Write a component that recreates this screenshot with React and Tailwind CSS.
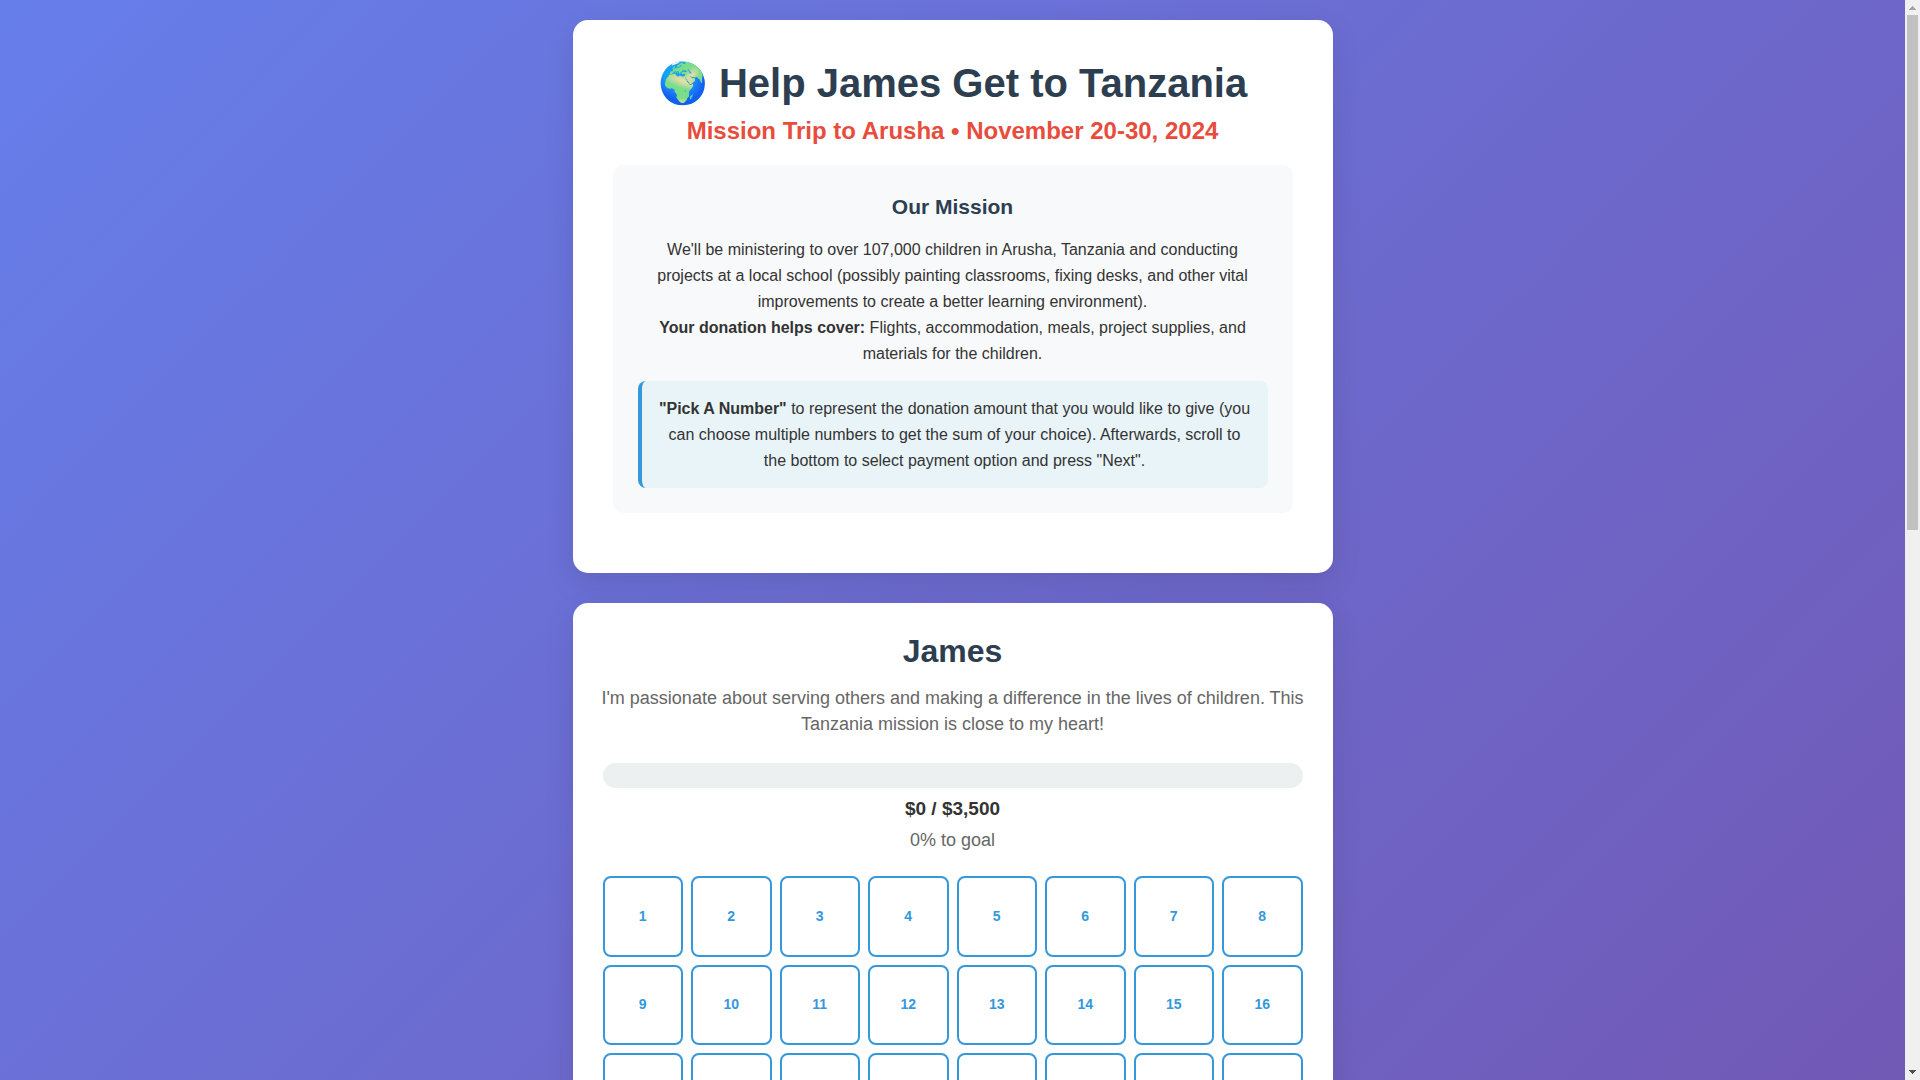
import { useState } from 'react'

const GOAL = 3500
const NUMBERS = Array.from({ length: 24 }, (_, i) => i + 1)

function MissionCard() {
  return (
    <header className="mb-[30px] rounded-[15px] bg-white p-10 pb-[60px] text-center shadow-[0_10px_30px_rgba(0,0,0,0.1)]">
      <h1 className="mb-[11px] text-[40px] leading-[46px] font-bold text-[#2c3e50]">
        🌍 Help James Get to Tanzania
      </h1>
      <p className="mb-[20px] text-[24px] leading-[28px] font-bold text-[#e74c3c]">
        Mission Trip to Arusha • November 20-30, 2024
      </p>

      <section className="rounded-[10px] bg-[#f8f9fa] p-[25px]">
        <h2 className="mb-[14px] text-[21px] leading-[33px] font-bold text-[#2c3e50]">Our Mission</h2>
        <p className="leading-[26px]">
          We'll be ministering to over 107,000 children in Arusha, Tanzania and conducting projects at a
          local school (possibly painting classrooms, fixing desks, and other vital improvements to create
          a better learning environment).
          <br />
          <strong>Your donation helps cover:</strong> Flights, accommodation, meals, project supplies, and
          materials for the children.
        </p>
        <p className="mt-[14px] rounded-[8px] border-l-4 border-[#3498db] bg-[#e8f4f8] p-[15px] pb-[14px] leading-[26px]">
          <strong>"Pick A Number"</strong> to represent the donation amount that you would like to give
          (you can choose multiple numbers to get the sum of your choice). Afterwards, scroll to the bottom
          to select payment option and press "Next".
        </p>
      </section>
    </header>
  )
}

function Progress({ raised }) {
  const percent = Math.min(100, Math.round((raised / GOAL) * 100))

  return (
    <div className="mb-[21px]">
      <div className="h-[25px] overflow-hidden rounded-full bg-[#ecf0f1]">
        <div className="h-full bg-[#3498db]" style={{ width: `${percent}%` }} />
      </div>
      <p className="mt-[6px] text-[19px] leading-[30px] font-bold">
        ${raised} / ${GOAL.toLocaleString('en-US')}
      </p>
      <p className="mt-px text-[18px] leading-[30px] text-[#666]">{percent}% to goal</p>
    </div>
  )
}

function NumberGrid({ selected, onToggle }) {
  return (
    <div className="grid grid-cols-8 gap-2">
      {NUMBERS.map(n => (
        <button
          key={n}
          type="button"
          aria-pressed={selected.includes(n)}
          onClick={() => onToggle(n)}
          className={`aspect-square cursor-pointer rounded-[8px] border-2 border-[#3498db] text-[14px] font-bold ${
            selected.includes(n) ? 'bg-[#3498db] text-white' : 'bg-white text-[#3498db]'
          }`}
        >
          {n}
        </button>
      ))}
    </div>
  )
}

function Scrollbar() {
  return (
    <div className="flex w-[15px] shrink-0 flex-col items-center bg-[#f0f0f0]" aria-hidden="true">
      <svg className="h-[15px] w-[15px] shrink-0" viewBox="0 0 15 15" fill="#a3a3a3" shapeRendering="crispEdges">
        <path d="M7 6h1v1h1v1h1v1h1v1H4V9h1V8h1V7h1z" />
      </svg>
      <div className="flex w-[11px] flex-1 flex-col">
        <div className="h-[49%] bg-[#c1c1c1]" />
      </div>
      <svg className="h-[15px] w-[15px] shrink-0" viewBox="0 0 15 15" fill="#505050" shapeRendering="crispEdges">
        <path d="M4 5h7v1h-1v1H9v1H8v1H7V8H6V7H5V6H4z" />
      </svg>
    </div>
  )
}

function App() {
  const [selected, setSelected] = useState([])

  const toggle = n => {
    setSelected(prev => (prev.includes(n) ? prev.filter(x => x !== n) : [...prev, n]))
  }

  return (
    <div className="flex h-screen font-['Liberation_Sans',Arial,sans-serif] text-[16px] text-[#333]">
      <div className="min-w-0 flex-1 overflow-y-auto [scrollbar-width:none]">
        <div className="min-h-[2202px] bg-[linear-gradient(135deg,#667eea_0%,#764ba2_100%)] p-5">
          <main className="mx-auto max-w-[760px]">
            <MissionCard />

            <section className="rounded-[15px] bg-white p-[30px] text-center shadow-[0_10px_30px_rgba(0,0,0,0.1)]">
              <h2 className="mb-[16px] text-[32px] leading-[36px] font-bold text-[#2c3e50]">James</h2>
              <p className="-mx-1 mb-[26px] text-[18px] leading-[26px] text-[#666]">
                I'm passionate about serving others and making a difference in the lives of children. This
                Tanzania mission is close to my heart!
              </p>
              <Progress raised={0} />
              <NumberGrid selected={selected} onToggle={toggle} />
            </section>
          </main>
        </div>
      </div>
      <Scrollbar />
    </div>
  )
}

export default App
